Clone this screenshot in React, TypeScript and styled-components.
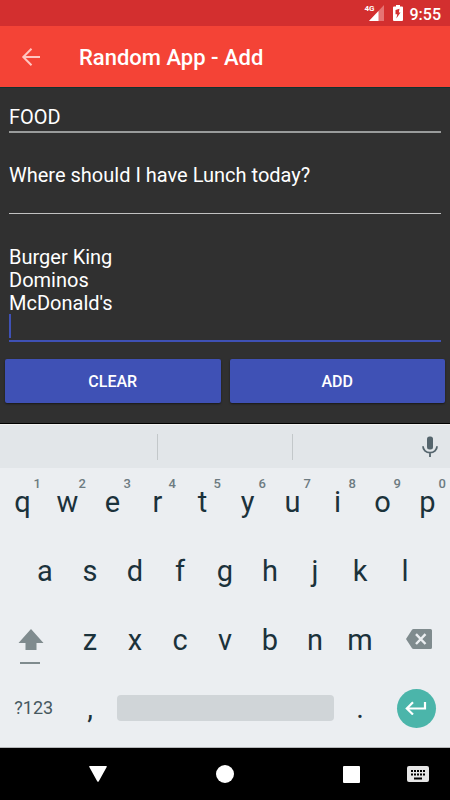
import React, { useState } from "react";
import styled, { createGlobalStyle } from "styled-components";

const GlobalStyle = createGlobalStyle`
  *, *::before, *::after { box-sizing: border-box; }
  body { margin: 0; background: #000; font-family: Roboto, "Liberation Sans", sans-serif; }
  button, input, textarea { font: inherit; color: inherit; margin: 0; padding: 0; border: 0; background: none; border-radius: 0; outline: none; }
  svg { display: block; }
`;

const Screen = styled.div`
  display: flex;
  flex-direction: column;
  min-height: 100vh;
  background: #303030;
`;

const StatusBar = styled.div`
  display: flex;
  align-items: center;
  justify-content: flex-end;
  height: 26px;
  padding-right: 9px;
  background: #d32f2f;
  color: #fff;
`;

const Signal = styled.div`
  position: relative;
  margin-right: 9px;
`;

const NetworkType = styled.span`
  position: absolute;
  left: -4px;
  top: 0;
  font-size: 8px;
  line-height: 8px;
  font-weight: 700;
`;

const Clock = styled.time`
  margin-left: 7px;
  font-size: 16px;
  line-height: 22px;
  font-weight: 500;
  padding-top: 3px;
`;

const AppBar = styled.header`
  display: flex;
  align-items: center;
  height: 62px;
  padding-left: 18px;
  background: #f44336;
  border-bottom: 1px solid #12302f;
  color: #fff;
`;

const BackButton = styled.button`
  width: 26px;
  height: 26px;
  margin-right: 35px;
  color: #ffc6c1;
`;

const Title = styled.h1`
  margin: 0;
  padding-top: 2px;
  font-size: 22px;
  line-height: 26px;
  font-weight: 500;
`;

const Form = styled.form`
  flex: 1;
  padding-top: 18px;
  border-bottom: 1px solid #000;
  color: #fff;
  font-size: 20px;
  line-height: 23px;
`;

const Field = styled.div<{ $gap: number }>`
  position: relative;
  margin: 0 9px ${(p) => p.$gap}px;
`;

const TextInput = styled.input`
  display: block;
  width: 100%;
  height: 27px;
  padding-bottom: 3px;
  border-bottom: 2px solid #999b9b;
`;

const TextArea = styled.textarea<{ $active?: boolean }>`
  display: block;
  width: 100%;
  resize: none;
  overflow: hidden;
  caret-color: transparent;
  padding-bottom: ${(p) => (p.$active ? 2 : 3)}px;
  border-bottom: ${(p) => (p.$active ? "2px solid #3f51b5" : "1px solid #c1c1c1")};
`;

const Caret = styled.span`
  position: absolute;
  left: 0;
  bottom: 4px;
  width: 2px;
  height: 24px;
  background: #3f51b5;
`;

const Actions = styled.div`
  display: grid;
  grid-template-columns: 1fr 1fr;
  gap: 9px;
  padding: 0 5px 20px;
`;

const ActionButton = styled.button`
  height: 44px;
  padding-top: 2px;
  border-radius: 2px;
  background: #3f51b5;
  box-shadow: 0 1px 2px rgba(0, 0, 0, 0.5);
  font-size: 16px;
  line-height: 20px;
  font-weight: 500;
`;

const Suggestions = styled.div`
  display: grid;
  grid-template-columns: 7fr 6fr 7fr;
  align-items: center;
  height: 44px;
  background: #e2e6e9;
  border-top: 1px solid #f3f3f1;
`;

const Suggestion = styled.div`
  display: flex;
  align-items: center;
  justify-content: flex-end;
  height: 26px;
  border-right: 1px solid #c3c8ca;
  &:last-child { border-right: 0; }
`;

const MicButton = styled.button`
  padding: 0 8px;
  color: #55656d;
`;

const Keyboard = styled.div`
  padding-bottom: 6px;
  background: #ebeef1;
  border-bottom: 1px solid #b5b7b9;
`;

const KeyRow = styled.div<{ $inset?: boolean; $bottom?: boolean }>`
  display: flex;
  height: ${(p) => (p.$bottom ? 66 : 69)}px;
  padding: 0 ${(p) => (p.$inset ? "5%" : "0")} ${(p) => (p.$bottom ? 0 : 2)}px;
`;

const Key = styled.button<{ $span?: number; $small?: boolean }>`
  position: relative;
  display: flex;
  flex: ${(p) => p.$span ?? 2} 1 0;
  min-width: 0;
  align-items: center;
  justify-content: center;
  color: ${(p) => (p.$small ? "#46585f" : "#1b323b")};
  font-size: ${(p) => (p.$small ? 18 : 29)}px;
  line-height: 34px;
`;

const Digit = styled.span`
  position: absolute;
  right: 4px;
  top: 8px;
  color: #6d7b81;
  font-size: 13px;
  line-height: 15px;
  font-weight: 500;
`;

const ShiftIcon = styled.svg`
  margin: 14px 5px 0 0;
`;

const DeleteIcon = styled.svg`
  margin: 0 0 1px 5px;
`;

const SpaceBar = styled.span`
  flex: 1;
  height: 26px;
  margin: 0 4px;
  border-radius: 4px;
  background: #d0d5d8;
`;

const EnterDisc = styled.span`
  display: flex;
  align-items: center;
  justify-content: center;
  width: 39px;
  height: 39px;
  border-radius: 50%;
  background: #4bb5aa;
`;

const NavBar = styled.nav`
  display: grid;
  grid-template-columns: 35px 1fr 1fr 1fr 35px;
  align-items: center;
  justify-items: center;
  height: 52px;
  background: #000;
  color: #fff;
`;

const NavButton = styled.button<{ $column: number }>`
  grid-row: 1;
  grid-column: ${(p) => p.$column};
`;

const KeyboardSwitch = styled(NavButton)`
  justify-self: end;
  margin-right: 21px;
`;

const NUMBERED = "qwertyuiop".split("").map((letter, i) => ({ letter, digit: (i + 1) % 10 }));

export default function App() {
  const [category, setCategory] = useState("FOOD");
  const [question, setQuestion] = useState("Where should I have Lunch today?");
  const [options, setOptions] = useState("Burger King\nDominos\nMcDonald's\n");

  const clear = () => {
    setCategory("");
    setQuestion("");
    setOptions("");
  };

  return (
    <Screen>
      <GlobalStyle />
      <StatusBar>
        <Signal>
          <svg width="15" height="16" viewBox="0 0 15 16">
            <path d="M15 0V16H0Z" fill="#e57373" />
            <path d="M9.500 5.900V16H0Z" fill="#fff" />
          </svg>
          <NetworkType>4G</NetworkType>
        </Signal>
        <svg width="10" height="16" viewBox="0 0 10 16">
          <path d="M3 0H7V1.500H9Q10 1.500 10 2.500V15Q10 16 9 16H1Q0 16 0 15V2.500Q0 1.500 1 1.500H3Z" fill="#fff" />
          <path d="M6.500 3.800L2.500 5V9.300H4.300L3.300 13.500L7.500 7.500H5.800Z" fill="#d32f2f" />
        </svg>
        <Clock>9:55</Clock>
      </StatusBar>

      <AppBar>
        <BackButton aria-label="Back">
          <svg width="26" height="26" viewBox="0 0 26 26" fill="none" stroke="currentColor" strokeWidth="2">
            <path d="M22 13H5.500M13.500 4.800L5.300 13L13.500 21.200" />
          </svg>
        </BackButton>
        <Title>Random App - Add</Title>
      </AppBar>

      <Form onSubmit={(e) => e.preventDefault()}>
        <Field $gap={31}>
          <TextInput aria-label="Category" value={category} onChange={(e) => setCategory(e.target.value)} />
        </Field>
        <Field $gap={32}>
          <TextArea aria-label="Question" rows={2} value={question} onChange={(e) => setQuestion(e.target.value)} />
        </Field>
        <Field $gap={17}>
          <TextArea $active aria-label="Options" rows={4} value={options} onChange={(e) => setOptions(e.target.value)} />
          <Caret />
        </Field>
        <Actions>
          <ActionButton type="button" onClick={clear}>CLEAR</ActionButton>
          <ActionButton type="submit">ADD</ActionButton>
        </Actions>
      </Form>

      <Suggestions>
        <Suggestion />
        <Suggestion />
        <Suggestion>
          <MicButton aria-label="Voice input">
            <svg width="24" height="24" viewBox="0 0 24 24">
              <rect x="9" y="1.500" width="6" height="13" rx="2.500" fill="currentColor" />
              <path d="M5 11.200C5 15 8 17.700 12 17.700S19 15 19 11.200M12 17.700V22" fill="none" stroke="currentColor" strokeWidth="1.800" />
            </svg>
          </MicButton>
        </Suggestion>
      </Suggestions>

      <Keyboard>
        <KeyRow>
          {NUMBERED.map(({ letter, digit }) => (
            <Key key={letter}>
              {letter}
              <Digit>{digit}</Digit>
            </Key>
          ))}
        </KeyRow>
        <KeyRow $inset>
          {"asdfghjkl".split("").map((letter) => (
            <Key key={letter}>{letter}</Key>
          ))}
        </KeyRow>
        <KeyRow>
          <Key $span={3} aria-label="Shift">
            <ShiftIcon width="26" height="36" viewBox="0 0 26 36" fill="#7f8b8e">
              <path d="M13 0L25.500 14H18.500V21H7.500V14H0.500Z" />
              <rect x="2" y="33" width="20" height="2" />
            </ShiftIcon>
          </Key>
          {"zxcvbnm".split("").map((letter) => (
            <Key key={letter}>{letter}</Key>
          ))}
          <Key $span={3} aria-label="Delete">
            <DeleteIcon width="26" height="20" viewBox="0 0 26 20">
              <path d="M7.500 0H24.500Q26 0 26 1.500V18.500Q26 20 24.500 20H7.500Q6.500 20 6 19.200L0 10L6 0.800Q6.500 0 7.500 0Z" fill="#7f8b8e" />
              <path d="M10 5.200L19.500 15M19.500 5.200L10 15" stroke="#ebeef1" strokeWidth="2.400" />
            </DeleteIcon>
          </Key>
        </KeyRow>
        <KeyRow $bottom>
          <Key $span={3} $small>?123</Key>
          <Key>,</Key>
          <Key $span={10} aria-label="Space">
            <SpaceBar />
          </Key>
          <Key>.</Key>
          <Key $span={3} aria-label="Enter">
            <EnterDisc>
              <svg width="22" height="14" viewBox="0 0 22 14" fill="none" stroke="#fff" strokeWidth="2.200">
                <path d="M20 1V7.500H2M8 1.200L1.800 7.500L8 13.500" />
              </svg>
            </EnterDisc>
          </Key>
        </KeyRow>
      </Keyboard>

      <NavBar>
        <NavButton $column={2} aria-label="Hide keyboard">
          <svg width="18" height="16" viewBox="0 0 18 16" fill="currentColor">
            <path d="M0.800 0H17.200Q18.300 0 17.700 1L9.800 15.200Q9 16.400 8.200 15.200L0.300 1Q-0.300 0 0.800 0Z" />
          </svg>
        </NavButton>
        <NavButton $column={3} aria-label="Home">
          <svg width="18" height="18" viewBox="0 0 18 18" fill="currentColor">
            <circle cx="9" cy="9" r="9" />
          </svg>
        </NavButton>
        <NavButton $column={4} aria-label="Recent apps">
          <svg width="17" height="17" viewBox="0 0 17 17" fill="currentColor">
            <rect width="17" height="17" rx="1" />
          </svg>
        </NavButton>
        <KeyboardSwitch $column={5} aria-label="Switch keyboard">
          <svg width="22" height="16" viewBox="0 0 22 16">
            <rect width="22" height="16" rx="2" fill="#e6e6e6" />
            <path d="M4 5H18M4 8.500H18" stroke="#000" strokeWidth="2" strokeDasharray="2 1" />
            <path d="M7 12.500H15" stroke="#000" strokeWidth="2" />
          </svg>
        </KeyboardSwitch>
      </NavBar>
    </Screen>
  );
}
